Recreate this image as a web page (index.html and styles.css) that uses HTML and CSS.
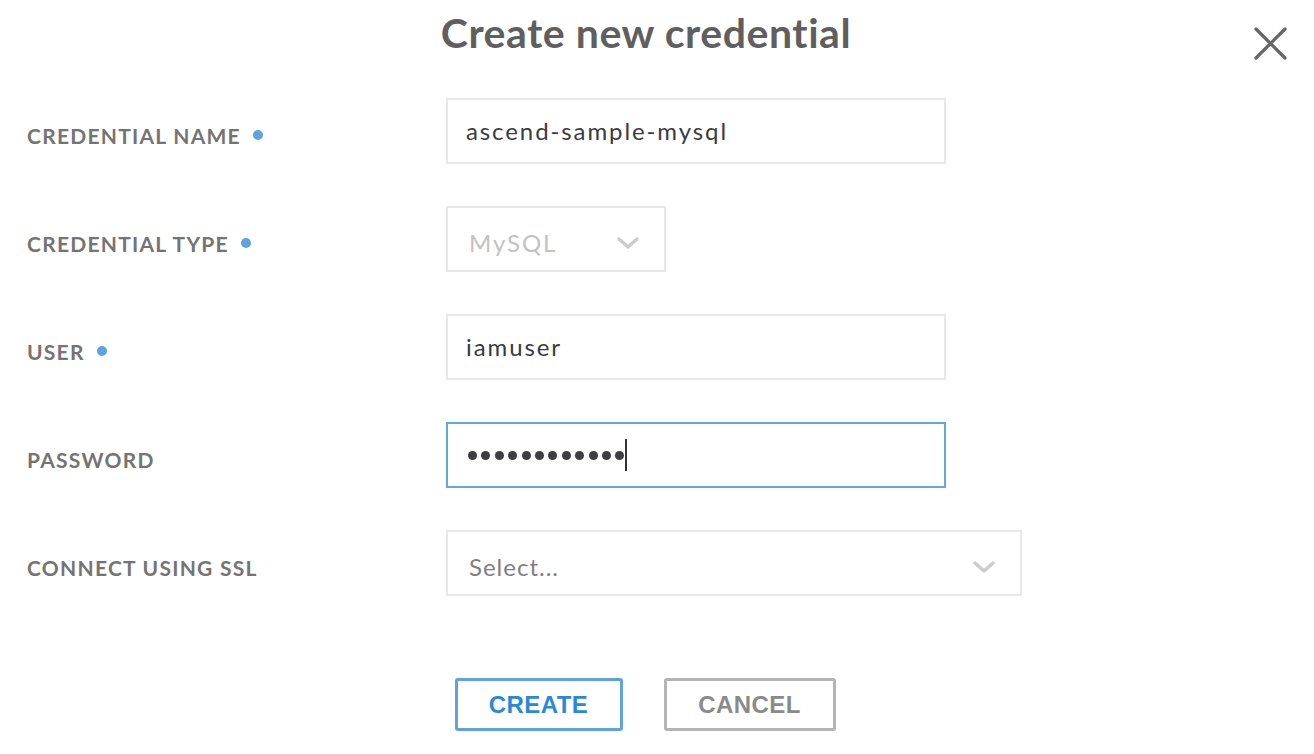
FILE: index.html
```html
<!DOCTYPE html>
<html>
<head>
<meta charset="utf-8">
<link rel="stylesheet" href="styles.css">
</head>
<body>
<div class="dialog">
  <header class="head">
    <h1 class="title">Create new credential</h1>
    <button class="close" aria-label="Close">
      <svg width="33" height="33" viewBox="0 0 33 33"><path d="M2 2 L31 31 M31 2 L2 31" stroke="#666" stroke-width="3.2" stroke-linecap="round" fill="none"/></svg>
    </button>
  </header>
  <form class="form">
    <div class="row">
      <div class="label">CREDENTIAL NAME<span class="req"></span></div>
      <div class="field wide"><span class="value">ascend-sample-mysql</span></div>
    </div>
    <div class="row">
      <div class="label">CREDENTIAL TYPE<span class="req"></span></div>
      <div class="field select small"><span class="value disabled">MySQL</span>
        <svg class="chev" width="24" height="14" viewBox="0 0 24 14"><path d="M3 3 L12 11 L21 3" stroke="#cccccc" stroke-width="3.4" stroke-linecap="round" stroke-linejoin="round" fill="none"/></svg>
      </div>
    </div>
    <div class="row">
      <div class="label">USER<span class="req"></span></div>
      <div class="field wide"><span class="value">iamuser</span></div>
    </div>
    <div class="row">
      <div class="label">PASSWORD</div>
      <div class="field wide focus"><span class="dots"><i></i><i></i><i></i><i></i><i></i><i></i><i></i><i></i><i></i><i></i><i></i><i></i></span><span class="caret"></span></div>
    </div>
    <div class="row">
      <div class="label">CONNECT USING SSL</div>
      <div class="field select large"><span class="value placeholder">Select...</span>
        <svg class="chev" width="24" height="14" viewBox="0 0 24 14"><path d="M3 3 L12 11 L21 3" stroke="#cccccc" stroke-width="3.4" stroke-linecap="round" stroke-linejoin="round" fill="none"/></svg>
      </div>
    </div>
  </form>
  <div class="actions">
    <button class="btn primary">CREATE</button>
    <button class="btn secondary">CANCEL</button>
  </div>
</div>
</body>
</html>
```
FILE: styles.css
```css
html, body {
  margin: 0;
  padding: 0;
  background: #ffffff;
}
body {
  font-family: "Lato", "Open Sans", sans-serif;
  width: 1314px;
  height: 754px;
  overflow: hidden;
}
.dialog {
  position: relative;
  padding: 0 0 0 27px;
}
.head {
  height: 98px;
  display: flex;
  justify-content: center;
  padding-right: 49px;
}
.title {
  margin: 8px 0 0 0;
  font-size: 41px;
  font-weight: 700;
  color: #5f5f5f;
  line-height: 50px;
  letter-spacing: 0.55px;
}
.close {
  position: absolute;
  top: 27px;
  right: 27px;
  width: 33px;
  height: 33px;
  padding: 0;
  border: 0;
  background: none;
}
.form {
  display: flex;
  flex-direction: column;
  gap: 42px;
}
.row {
  display: grid;
  grid-template-columns: 419px auto;
  align-items: center;
  height: 66px;
}
.label {
  display: flex;
  align-items: center;
  font-size: 21px;
  font-weight: 700;
  color: #747474;
  letter-spacing: 1.25px;
  padding-top: 8px;
}
.req {
  width: 10px;
  height: 10px;
  border-radius: 50%;
  background: #5ea3e0;
  margin-left: 12px;
}
.field {
  box-sizing: border-box;
  height: 66px;
  border: 2px solid #e8e8e8;
  display: flex;
  align-items: center;
  padding: 0 0 0 18px;
  font-size: 24px;
  letter-spacing: 1.9px;
  color: #3b3b40;
}
.field.wide { width: 500px; }
.field.small { width: 220px; padding-left: 21px; }
.field.large { width: 576px; padding-left: 21px; }
.field.select {
  justify-content: space-between;
  padding-right: 24px;
  padding-top: 8px;
}
.field.focus { border-color: #63a6e2; padding-left: 20px; }
.value { line-height: 30px; }
.value.disabled { color: #c2c2c2; }
.value.placeholder { color: #7f7f7f; letter-spacing: 1px; }
.chev { margin-top: 0; }
.dots {
  display: flex;
  gap: 4.4px;
}
.dots i {
  width: 9px;
  height: 9px;
  border-radius: 50%;
  background: #3d3d42;
}
.caret {
  width: 2px;
  height: 32px;
  background: #333;
  margin-left: 1px;
}
.actions {
  display: flex;
  justify-content: center;
  gap: 41px;
  margin-top: 82px;
  padding-right: 51px;
}
.btn {
  box-sizing: border-box;
  height: 53px;
  border-radius: 3px;
  background: #fff;
  font-family: "Liberation Sans", "Inter", sans-serif;
  font-weight: 700;
  font-size: 24px;
  letter-spacing: 0.4px;
  padding: 0;
}
.btn.primary {
  width: 168px;
  border: 3px solid #5ea3e0;
  color: #2b88d8;
}
.btn.secondary {
  width: 172px;
  border: 3px solid #b4b4b4;
  color: #8a8a8a;
}
```
